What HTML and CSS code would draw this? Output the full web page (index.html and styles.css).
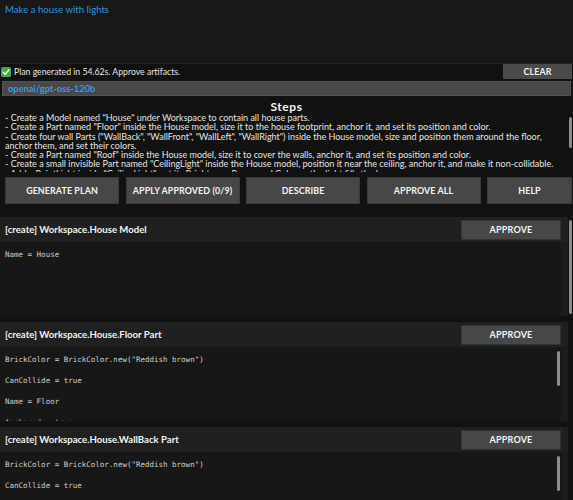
FILE: index.html
```html
<!DOCTYPE html>
<html lang="en">
<head>
<meta charset="utf-8">
<title>Builder Assistant</title>
<link rel="stylesheet" href="styles.css">
</head>
<body>
<div class="app">
  <div class="prompt">Make a house with lights</div>

  <div class="status">
    <span class="ok-icon">
      <svg viewBox="0 0 10 10" width="10" height="10">
        <rect x="0" y="0" width="10" height="10" rx="2" fill="#3fae49"/>
        <path d="M2.2 5.2 L4.2 7.2 L7.9 2.9" fill="none" stroke="#fff" stroke-width="1.5" stroke-linecap="round" stroke-linejoin="round"/>
      </svg>
    </span>
    <span class="status-text">Plan generated in 54.62s. Approve artifacts.</span>
    <button class="clear">CLEAR</button>
  </div>

  <div class="model">openai/gpt-oss-120b</div>

  <section class="steps">
    <h2>Steps</h2>
    <div class="scroll-area">
      <div class="steps-list">
        <p>- Create a Model named "House" under Workspace to contain all house parts.</p>
        <p>- Create a Part named "Floor" inside the House model, size it to the house footprint, anchor it, and set its position and color.</p>
        <p>- Create four wall Parts ("WallBack", "WallFront", "WallLeft", "WallRight") inside the House model, size and position them around the floor, anchor them, and set their colors.</p>
        <p>- Create a Part named "Roof" inside the House model, size it to cover the walls, anchor it, and set its position and color.</p>
        <p>- Create a small invisible Part named "CeilingLight" inside the House model, position it near the ceiling, anchor it, and make it non-collidable.</p>
        <p>- Add a PointLight inside "CeilingLight", set its Brightness, Range and Color so the light fills the house.</p>
        <p>- Group all parts under the House model and set the Floor as its PrimaryPart.</p>
        <p>- Verify that every part is anchored and that the light is enabled.</p>
      </div>
      <span class="thumb thumb-steps"></span>
    </div>
  </section>

  <div class="actions">
    <button class="btn">GENERATE PLAN</button>
    <button class="btn">APPLY APPROVED (0/9)</button>
    <button class="btn">DESCRIBE</button>
    <button class="btn">APPROVE ALL</button>
    <button class="btn btn-help">HELP</button>
  </div>

  <div class="scroll-area artifacts-wrap">
    <div class="artifacts">
      <div class="card">
        <div class="card-head"><span class="card-title">[create] Workspace.House Model</span><button class="approve">APPROVE</button></div>
        <div class="card-body">
          <div class="prop">Name = House</div>
        </div>
      </div>

      <div class="card">
        <div class="card-head"><span class="card-title">[create] Workspace.House.Floor Part</span><button class="approve">APPROVE</button></div>
        <div class="card-body">
          <div class="prop">BrickColor = BrickColor.new("Reddish brown")</div>
          <div class="prop">CanCollide = true</div>
          <div class="prop">Name = Floor</div>
          <div class="prop">Anchored = true</div>
          <div class="prop">Parent = Workspace.House</div>
          <div class="prop">Position = Vector3.new(0, 0.5, 0)</div>
          <div class="prop">Size = Vector3.new(20, 1, 20)</div>
          <span class="thumb thumb-body"></span>
        </div>
      </div>

      <div class="card">
        <div class="card-head"><span class="card-title">[create] Workspace.House.WallBack Part</span><button class="approve">APPROVE</button></div>
        <div class="card-body">
          <div class="prop">BrickColor = BrickColor.new("Reddish brown")</div>
          <div class="prop">CanCollide = true</div>
          <div class="prop">Name = WallBack</div>
          <div class="prop">Anchored = true</div>
          <div class="prop">Parent = Workspace.House</div>
          <div class="prop">Position = Vector3.new(0, 6, -9.5)</div>
          <div class="prop">Size = Vector3.new(20, 10, 1)</div>
          <span class="thumb thumb-body"></span>
        </div>
      </div>

      <div class="card">
        <div class="card-head"><span class="card-title">[create] Workspace.House.WallFront Part</span><button class="approve">APPROVE</button></div>
        <div class="card-body">
          <div class="prop">BrickColor = BrickColor.new("Reddish brown")</div>
          <div class="prop">CanCollide = true</div>
          <div class="prop">Name = WallFront</div>
          <div class="prop">Anchored = true</div>
          <div class="prop">Parent = Workspace.House</div>
          <div class="prop">Position = Vector3.new(0, 6, 9.5)</div>
          <div class="prop">Size = Vector3.new(20, 10, 1)</div>
          <span class="thumb thumb-body"></span>
        </div>
      </div>

      <div class="card">
        <div class="card-head"><span class="card-title">[create] Workspace.House.WallLeft Part</span><button class="approve">APPROVE</button></div>
        <div class="card-body">
          <div class="prop">BrickColor = BrickColor.new("Reddish brown")</div>
          <div class="prop">CanCollide = true</div>
          <div class="prop">Name = WallLeft</div>
          <div class="prop">Anchored = true</div>
          <div class="prop">Parent = Workspace.House</div>
          <div class="prop">Position = Vector3.new(-9.5, 6, 0)</div>
          <div class="prop">Size = Vector3.new(1, 10, 18)</div>
          <span class="thumb thumb-body"></span>
        </div>
      </div>
    </div>
    <span class="thumb thumb-list"></span>
  </div>
</div>
</body>
</html>
```

FILE: styles.css
```css
html, body {
  margin: 0;
  padding: 0;
  background: #121212;
  overflow: hidden;
}

body {
  font-family: Lato, "Liberation Sans", sans-serif;
  color: #e6e6e6;
}

button {
  font-family: inherit;
  cursor: pointer;
}

.app {
  width: 573px;
  height: 500px;
  display: flex;
  flex-direction: column;
  overflow: hidden;
}

/* prompt box */
.prompt {
  height: 63px;
  box-sizing: border-box;
  padding: 4px 5px;
  background: #181818;
  color: #2f96e2;
  font-size: 9.6px;
  line-height: 11px;
  flex: none;
}

/* status line */
.status {
  height: 16px;
  flex: none;
  display: flex;
  align-items: center;
  border-top: 1px solid #262626;
  background: #111111;
  box-sizing: border-box;
}

.ok-icon {
  display: flex;
  width: 10px;
  height: 10px;
  margin: 0 3px 0 1px;
}

.status-text {
  flex: 1;
  font-size: 8.7px;
  color: #e4e4e4;
  white-space: nowrap;
}

.clear {
  width: 69px;
  height: 15px;
  margin-right: 1px;
  border: none;
  background: #4a4a4a;
  color: #f2f2f2;
  font-weight: 700;
  font-size: 8.8px;
  letter-spacing: 0.2px;
  padding: 0;
}

/* model field */
.model {
  flex: none;
  height: 15px;
  margin: 2px 2px 0;
  box-sizing: border-box;
  padding-left: 5px;
  background: #484848;
  border: 1px solid #525252;
  color: #2d9cf0;
  font-weight: 700;
  font-size: 9.3px;
  line-height: 13px;
}

/* steps */
.steps {
  flex: none;
  margin-top: 4px;
}

.steps h2 {
  margin: 1px 0 0;
  height: 12px;
  text-align: center;
  font-size: 12px;
  line-height: 12px;
  font-weight: 700;
  letter-spacing: 0.6px;
  color: #f4f4f4;
}

.scroll-area {
  position: relative;
}

.steps-list {
  height: 59px;
  overflow: hidden;
  padding: 0 8px 0 5px;
  box-sizing: border-box;
  font-size: 9px;
  line-height: 9.3px;
  color: #e4e4e4;
}

.steps-list p {
  margin: 0;
}

/* scrollbar thumbs drawn over their scroll areas */
.thumb {
  position: absolute;
  width: 3px;
  border-radius: 2px;
  background: #8c8c8c;
}

.thumb-steps {
  right: 1px;
  top: 4px;
  height: 31px;
}

.thumb-list {
  right: 1px;
  top: 3px;
  height: 94px;
}

.thumb-body {
  right: 1px;
  top: 4px;
  height: 35px;
}

/* action buttons */
.actions {
  flex: none;
  display: flex;
  gap: 6.5px;
  margin: 5px 0 0 5px;
  height: 27px;
}

.btn {
  width: 114px;
  height: 27px;
  flex: none;
  padding: 0;
  background: #474747;
  border: 1px solid #3a3a3a;
  color: #f4f4f4;
  font-weight: 700;
  font-size: 8.9px;
  letter-spacing: 0.1px;
}

.btn-help {
  width: 85px;
}

/* artifact list */
.artifacts-wrap {
  flex: 1;
  min-height: 0;
  margin-top: 13px;
}

.artifacts {
  height: 100%;
  overflow: hidden;
}

.card {
  width: 568px;
  background: #1c1c1c;
  margin-bottom: 6px;
}

.card-head {
  height: 25px;
  display: flex;
  align-items: center;
  justify-content: space-between;
  background: #202020;
  padding-left: 5px;
}

.card-title {
  font-weight: 700;
  font-size: 9.6px;
  color: #f2f2f2;
  white-space: nowrap;
}

.approve {
  width: 100px;
  height: 20px;
  margin-right: 7px;
  padding: 0;
  background: #474747;
  border: 1px solid #2b3540;
  color: #f4f4f4;
  font-weight: 700;
  font-size: 9px;
  letter-spacing: 0.2px;
}

.card-body {
  position: relative;
  width: 561px;
  height: 74px;
  box-sizing: border-box;
  padding: 2px 5px 0;
  background: #171717;
  overflow: hidden;
}

.prop {
  font-family: "DejaVu Sans Mono", "Liberation Mono", monospace;
  font-size: 7.5px;
  line-height: 21px;
  color: #cfcfcf;
  white-space: nowrap;
}
```
